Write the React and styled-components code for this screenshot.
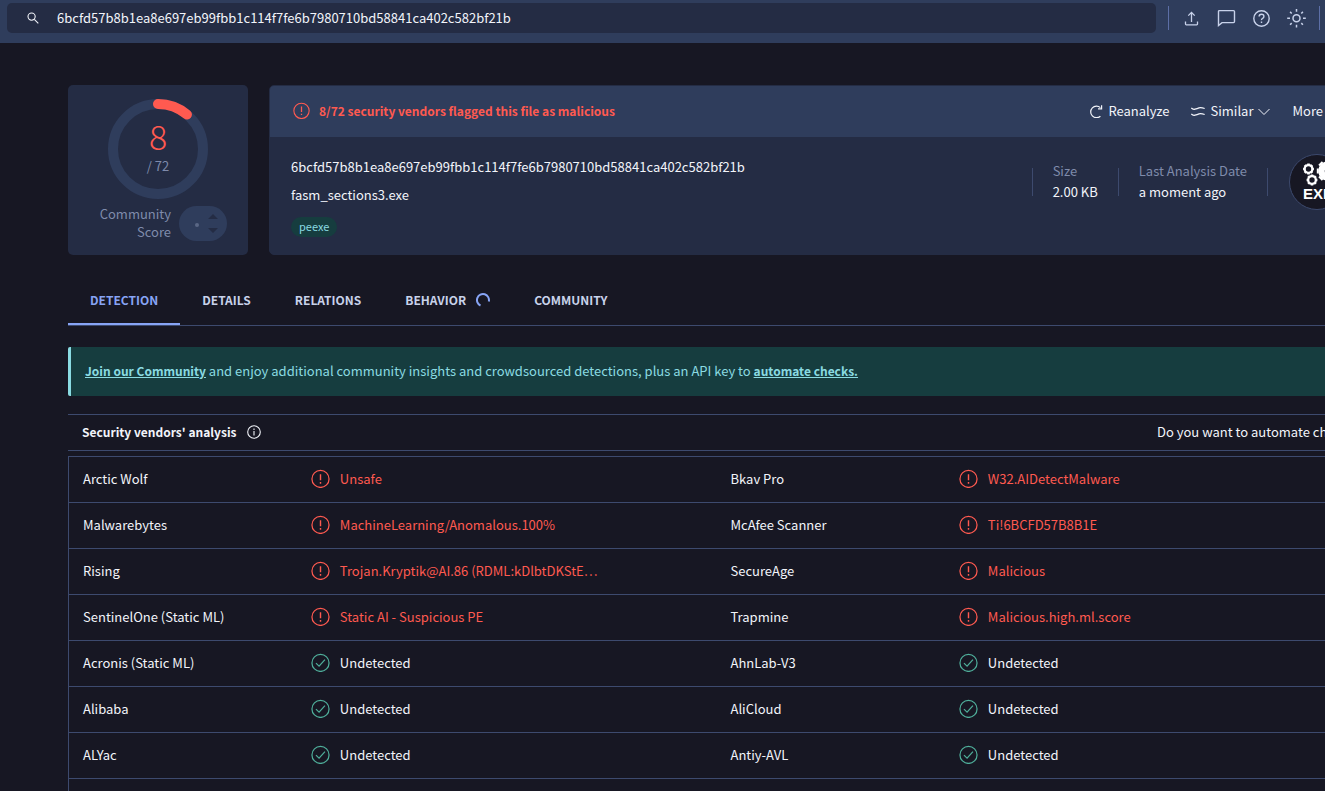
import React from 'react';
import styled, { createGlobalStyle, css } from 'styled-components';

const color = {
  page: '#171723',
  card: '#242c44',
  raised: '#2f3d5c',
  line: '#3d4a6e',
  text: '#f2f4fa',
  muted: '#7f8bab',
  soft: '#c8d2ea',
  accent: '#87a4f5',
  danger: '#ff5a50',
  ok: '#4fae9a',
  teal: '#163d3f',
  tealText: '#8adbe2',
};

const GlobalStyle = createGlobalStyle`
  * { box-sizing: border-box; }
  html, body { margin: 0; background: ${color.page}; }
  body {
    color: ${color.text};
    font-family: "Noto Sans CJK SC", "Noto Sans", sans-serif;
    font-size: 13px;
    line-height: 20px;
  }
  button, input { font: inherit; color: inherit; }
`;

const resetButton = css`
  border: 0;
  padding: 0;
  background: none;
  cursor: pointer;
`;

const Viewport = styled.div`
  height: 100vh;
  overflow: hidden;
`;

const Page = styled.div`
  width: calc(100% + 108px);
`;

const TopBar = styled.header`
  display: flex;
  align-items: flex-start;
  height: 43px;
  padding: 3px 113px 0 7px;
  background: ${color.raised};
`;

const Search = styled.label`
  flex: 1;
  display: flex;
  align-items: center;
  height: 30px;
  padding-left: 20px;
  gap: 18px;
  border-radius: 5px;
  background: ${color.card};
`;

const SearchInput = styled.input`
  flex: 1;
  min-width: 0;
  height: 30px;
  padding: 0 0 2px;
  border: 0;
  outline: 0;
  background: none;
`;

const Tools = styled.div`
  display: flex;
  align-items: center;
  gap: 15px;
  height: 24px;
  margin: 3px 0 0 12px;
  padding: 0 13px 0 12px;
  border: solid #5d6fa6;
  border-width: 0 1px;
`;

const IconButton = styled.button`
  ${resetButton}
  display: flex;
  width: 20px;
  height: 20px;
  color: ${color.soft};
`;

const Content = styled.main`
  padding: 42px 68px 0;
`;

const Summary = styled.section`
  display: flex;
  gap: 21px;
`;

const ScoreCard = styled.div`
  display: flex;
  flex-direction: column;
  align-items: center;
  width: 180px;
  height: 170px;
  padding-top: 14px;
  border-radius: 5px;
  background: ${color.card};
`;

const Gauge = styled.div`
  display: grid;
  width: 100px;
  height: 100px;
  > * { grid-area: 1 / 1; }
`;

const GaugeText = styled.div`
  display: flex;
  flex-direction: column;
  align-items: center;
  padding-top: 18px;
  color: ${color.muted};
`;

const Hits = styled.span`
  color: ${color.danger};
  font-size: 34px;
  font-weight: 300;
  line-height: 38px;
`;

const Total = styled.span`
  line-height: 22px;
`;

const Community = styled.div`
  display: flex;
  align-items: center;
  align-self: flex-end;
  gap: 8px;
  margin: 6px 21px 0 0;
  color: ${color.muted};
  line-height: 18px;
  text-align: right;
`;

const VotePill = styled.div`
  display: flex;
  width: 48px;
  height: 35px;
  border-radius: 18px;
  background: ${color.raised};
`;

const FileCard = styled.div`
  flex: 1;
  height: 170px;
  border: 1px solid ${color.card};
  border-radius: 5px;
  background: ${color.card};
  overflow: hidden;
`;

const FileHead = styled.div`
  display: flex;
  align-items: center;
  height: 51px;
  padding: 0 24px 2px 23px;
  background: ${color.raised};
`;

const Verdict = styled.strong`
  display: flex;
  align-items: center;
  gap: 9px;
  margin-right: auto;
  color: ${color.danger};
  font-size: 12px;
`;

const Actions = styled.div`
  display: flex;
  gap: 22px;
`;

const Action = styled.button`
  ${resetButton}
  display: flex;
  align-items: center;
  gap: 5px;
`;

const FileBody = styled.div`
  display: flex;
  align-items: flex-start;
  padding: 17px 19px 0 21px;
`;

const FileInfo = styled.div`
  flex: 1;
  display: flex;
  flex-direction: column;
  align-items: flex-start;
  gap: 8px;
  padding-top: 3px;
`;

const Tag = styled.a`
  margin-top: 4px;
  padding: 0 8px 1px;
  border-radius: 10px;
  background: ${color.teal};
  color: ${color.tealText};
  font-size: 11px;
  line-height: 19px;
  text-decoration: none;
`;

const Facts = styled.dl`
  display: flex;
  align-items: center;
  height: 56px;
  margin: 0;
`;

const Fact = styled.div`
  display: flex;
  flex-direction: column;
  justify-content: center;
  height: 28px;
  padding: 0 20px 2px;
  border-left: 1px solid ${color.line};
  white-space: nowrap;
`;

const FactName = styled.dt`
  color: ${color.muted};
  line-height: 21px;
`;

const FactValue = styled.dd`
  margin: 0;
  line-height: 21px;
`;

const FileType = styled.div`
  display: flex;
  align-items: center;
  height: 28px;
  padding-left: 21px;
  border-left: 1px solid ${color.line};
`;

const Tabs = styled.nav`
  display: flex;
  height: 51px;
  margin-top: 20px;
  border-bottom: 1px solid ${color.line};
`;

const Tab = styled.a`
  display: flex;
  align-items: center;
  gap: 10px;
  padding: 2px 22px 0;
  border-bottom: 2px solid ${(p) => (p.$active ? color.accent : 'transparent')};
  color: ${(p) => (p.$active ? color.accent : color.soft)};
  font-size: 12px;
  font-weight: 700;
  text-decoration: none;
`;

const Banner = styled.p`
  margin: 21px 0 18px;
  padding: 14px 14px 15px;
  border-left: 3px solid ${color.tealText};
  border-radius: 2px;
  background: ${color.teal};
  color: ${color.tealText};
  a { color: inherit; font-size: 12px; font-weight: 700; }
`;

const AnalysisHead = styled.div`
  display: flex;
  align-items: center;
  justify-content: space-between;
  height: 37px;
  padding: 0 14px 2px;
  border: solid ${color.line};
  border-width: 1px 0;
  white-space: nowrap;
`;

const AnalysisTitle = styled.h2`
  display: flex;
  align-items: center;
  gap: 11px;
  margin: 0;
  font-size: 12px;
  font-weight: 700;
`;

const AutomateNote = styled.span`
  width: 194px;
`;

const Results = styled.table`
  width: 100%;
  margin-top: 5px;
  border: 1px solid ${color.line};
  border-collapse: collapse;
  table-layout: fixed;
`;

const Row = styled.tr`
  height: 46px;
  border-top: 1px solid ${color.line};
`;

const Vendor = styled.th`
  width: 18.7%;
  padding: 0 14px 2px;
  font-weight: 400;
  text-align: left;
`;

const ResultCell = styled.td`
  padding: 0 0 2px;
`;

const Result = styled.span`
  display: flex;
  align-items: center;
  gap: 10px;
  color: ${(p) => (p.$bad ? color.danger : color.text)};
`;

const Svg = ({ size = 20, box = size, children, ...rest }) => (
  <svg width={size} height={size} viewBox={`0 0 ${box} ${box}`} fill="none" stroke="currentColor" aria-hidden="true" {...rest}>
    {children}
  </svg>
);

const AlertIcon = ({ size }) => (
  <Svg size={size} box={20} strokeWidth="1.3">
    <circle cx="10" cy="10.4" r="9" />
    <path d="M10 5.400v6.500M10 13.800v1.600" strokeWidth="1.5" />
  </Svg>
);

const CheckIcon = () => (
  <Svg size={19} box={20} stroke={color.ok} strokeWidth="1.3">
    <circle cx="10" cy="10.4" r="9" />
    <path d="M5.200 10.700l3.300 3.200 6.200-7" />
  </Svg>
);

const Chevron = () => (
  <Svg size={12} strokeWidth="1"><path d="M.5 4l5.500 5.500L11.500 4" /></Svg>
);

const gearTeeth = (cx, cy, r, w, n) =>
  Array.from({ length: n }, (_, i) => {
    const a = (i * 2 * Math.PI) / n;
    return <line key={i} x1={cx + Math.cos(a) * (r - 2)} y1={cy + Math.sin(a) * (r - 2)} x2={cx + Math.cos(a) * r} y2={cy + Math.sin(a) * r} strokeWidth={w} />;
  });

const ExeLogo = () => (
  <svg width="56" height="56" viewBox="0 0 56 56" role="img" aria-label="EXE">
    <circle cx="28" cy="28" r="27.5" fill={color.page} stroke={color.line} />
    <g fill="none" stroke="#fff">
      <circle cx="19.5" cy="15" r="3.8" strokeWidth="2.2" />
      {gearTeeth(19.5, 15, 5.4, 2.6, 8)}
      <circle cx="23" cy="26" r="3.8" strokeWidth="2.2" />
      {gearTeeth(23, 26, 5.4, 2.6, 8)}
      <circle cx="39" cy="17" r="6.5" strokeWidth="6.5" />
      {gearTeeth(39, 17, 11.2, 5, 8)}
    </g>
    <text x="14" y="45" fill="#fff" fontFamily="Liberation Sans, sans-serif" fontWeight="700" fontSize="15">EXE</text>
  </svg>
);

const HASH = '6bcfd57b8b1ea8e697eb99fbb1c114f7fe6b7980710bd58841ca402c582bf21b';

const rows = [
  ['Arctic Wolf', 'Unsafe', 'Bkav Pro', 'W32.AIDetectMalware'],
  ['Malwarebytes', 'MachineLearning/Anomalous.100%', 'McAfee Scanner', 'Ti!6BCFD57B8B1E'],
  ['Rising', 'Trojan.Kryptik@AI.86 (RDML:kDlbtDKStE…', 'SecureAge', 'Malicious'],
  ['SentinelOne (Static ML)', 'Static AI - Suspicious PE', 'Trapmine', 'Malicious.high.ml.score'],
  ['Acronis (Static ML)', 'Undetected', 'AhnLab-V3', 'Undetected'],
  ['Alibaba', 'Undetected', 'AliCloud', 'Undetected'],
  ['ALYac', 'Undetected', 'Antiy-AVL', 'Undetected'],
];

const Verdicts = ({ vendor, result }) => {
  const bad = result !== 'Undetected';
  return (
    <>
      <Vendor scope="row">{vendor}</Vendor>
      <ResultCell>
        <Result $bad={bad}>
          {bad ? <AlertIcon size={19} /> : <CheckIcon />}
          {result}
        </Result>
      </ResultCell>
    </>
  );
};

export default function App() {
  return (
    <Viewport>
      <GlobalStyle />
      <Page>
        <TopBar>
          <Search>
            <Svg size={12} strokeWidth="1.1"><circle cx="4.6" cy="4.6" r="3.6" /><path d="M7.3 7.3l4 4" /></Svg>
            <SearchInput type="text" aria-label="Search" defaultValue={HASH} />
          </Search>
          <Tools>
            <IconButton aria-label="Upload">
              <Svg strokeWidth="1.3"><path d="M10.500 14V4.500M7.300 7.600l3.200-3.200 3.200 3.200M4.500 13.500v2.500q0 .8.8.8h10.400q.8 0 .8-.8v-2.500" /></Svg>
            </IconButton>
            <IconButton aria-label="Comments">
              <Svg strokeWidth="1.4"><path d="M3.500 2.600h14q1 0 1 1v10q0 1-1 1H6L2.500 17.600V3.600q0-1 1-1z" /></Svg>
            </IconButton>
            <IconButton aria-label="Help">
              <Svg strokeWidth="1.4">
                <circle cx="10.500" cy="10.500" r="7.700" />
                <path d="M8.100 8.600q0-2.300 2.400-2.300t2.400 2.100q0 1.200-1.300 1.900t-1.100 1.900M10.500 13.500v1.400" />
              </Svg>
            </IconButton>
            <IconButton aria-label="Theme">
              <Svg strokeWidth="1.5">
                <circle cx="10.500" cy="10.300" r="3.500" />
                <path d="M10.500 1v2.800M10.500 16.800v2.800M1.200 10.300h2.800M17 10.300h2.800M4.100 3.900l1.600 1.600M15.300 15.100l1.600 1.600M4.100 16.700l1.600-1.600M15.300 5.500l1.600-1.600" />
              </Svg>
            </IconButton>
          </Tools>
        </TopBar>

        <Content>
          <Summary>
            <ScoreCard>
              <Gauge>
                <svg width="100" height="100" viewBox="0 0 100 100" fill="none" strokeWidth="10" aria-hidden="true">
                  <circle cx="50" cy="50" r="45" stroke={color.raised} />
                  <path d="M50 5A45 45 0 0 1 78.930 15.530" stroke={color.danger} strokeLinecap="round" />
                </svg>
                <GaugeText>
                  <Hits>8</Hits>
                  <Total>/ 72</Total>
                </GaugeText>
              </Gauge>
              <Community>
                <span>Community<br />Score</span>
                <VotePill>
                  <svg width="48" height="35" viewBox="0 0 48 35" aria-hidden="true">
                    <circle cx="18" cy="19" r="2" fill="#5a6785" />
                    <path d="M29 13l5-5 5 5zM29 22l5 5 5-5z" fill={color.card} />
                  </svg>
                </VotePill>
              </Community>
            </ScoreCard>

            <FileCard>
              <FileHead>
                <Verdict>
                  <AlertIcon size={17} />
                  8/72 security vendors flagged this file as malicious
                </Verdict>
                <Actions>
                  <Action>
                    <Svg size={14} strokeWidth="1.2"><path d="M11.400 12.200A5.800 5.800 0 1 1 11.400 3.600M12.600 1.200v3.600H9" /></Svg>
                    Reanalyze
                  </Action>
                  <Action>
                    <Svg size={14} strokeWidth="1.2"><path d="M.3 4q1.500 1.800 3.700 1.200t4-1.300 5.700.6M.3 10q1.500 1.800 3.700 1.200t4-1.300 5.700.6" /></Svg>
                    Similar
                    <Chevron />
                  </Action>
                  <Action>
                    More
                    <Chevron />
                  </Action>
                </Actions>
              </FileHead>
              <FileBody>
                <FileInfo>
                  <span>{HASH}</span>
                  <span>fasm_sections3.exe</span>
                  <Tag href="#peexe">peexe</Tag>
                </FileInfo>
                <Facts>
                  <Fact><FactName>Size</FactName><FactValue>2.00 KB</FactValue></Fact>
                  <Fact><FactName>Last Analysis Date</FactName><FactValue>a moment ago</FactValue></Fact>
                  <FileType><ExeLogo /></FileType>
                </Facts>
              </FileBody>
            </FileCard>
          </Summary>

          <Tabs>
            <Tab href="#detection" $active>DETECTION</Tab>
            <Tab href="#details">DETAILS</Tab>
            <Tab href="#relations">RELATIONS</Tab>
            <Tab href="#behavior">
              BEHAVIOR
              <Svg size={14} stroke={color.accent} strokeWidth="2"><path d="M4.500 12.500A6 6 0 1 1 12.800 8.500" /></Svg>
            </Tab>
            <Tab href="#community">COMMUNITY</Tab>
          </Tabs>

          <Banner>
            <a href="#join">Join our Community</a> and enjoy additional community insights and crowdsourced
            detections, plus an API key to <a href="#automate">automate checks.</a>
          </Banner>

          <AnalysisHead>
            <AnalysisTitle>
              Security vendors' analysis
              <Svg size={14} strokeWidth="1.1"><circle cx="7" cy="7" r="6.300" /><path d="M7 3.600v1.300M7 6v4.500" /></Svg>
            </AnalysisTitle>
            <AutomateNote>Do you want to automate checks?</AutomateNote>
          </AnalysisHead>

          <Results>
            <tbody>
              {rows.map(([a, ra, b, rb]) => (
                <Row key={a}>
                  <Verdicts vendor={a} result={ra} />
                  <Verdicts vendor={b} result={rb} />
                </Row>
              ))}
              <Row><td colSpan={4} /></Row>
            </tbody>
          </Results>
        </Content>
      </Page>
    </Viewport>
  );
}
